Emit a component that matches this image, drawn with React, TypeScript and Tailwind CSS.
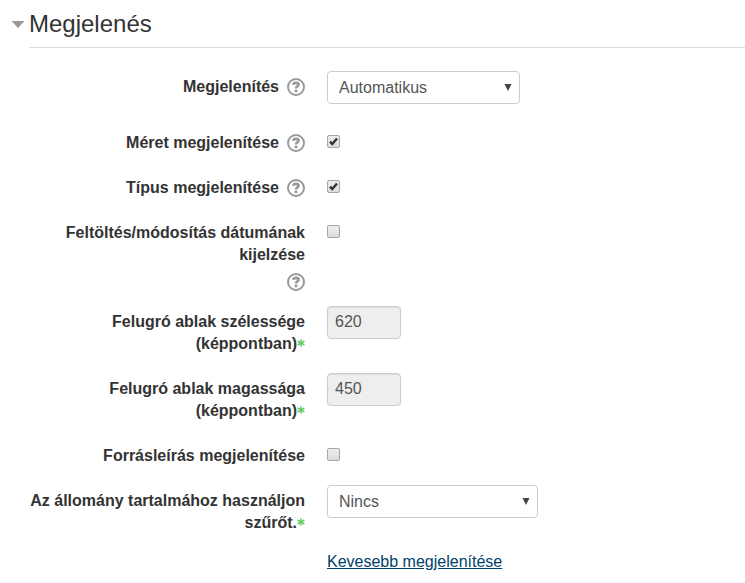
import { useId, type ReactNode } from "react";

function RequiredMark() {
  return (
    <svg
      className="inline-block h-2 w-2 align-[2px]"
      viewBox="0 0 8 8"
      role="img"
      aria-label="Kötelező"
    >
      <path
        d="M4 0.3v7.4M0.6 2l6.8 4M7.4 2l-6.8 4"
        stroke="#6acb6a"
        strokeWidth="1.5"
        fill="none"
      />
    </svg>
  );
}

function HelpButton({ topic }: { topic: string }) {
  return (
    <button
      type="button"
      aria-label={`Súgó: ${topic}`}
      className="flex h-[22px] w-[18px] items-center"
    >
      <svg className="h-[18px] w-[18px]" viewBox="0 0 18 18" fill="none">
        <circle cx="9" cy="9" r="8" stroke="#999" strokeWidth="2" />
        <path
          d="M6.3 6.9C6.5 5.5 7.5 4.9 9 4.9s2.6 0.7 2.6 1.9c0 1.7-2.6 1.6-2.6 3.6"
          stroke="#999"
          strokeWidth="2.6"
        />
        <rect x="7.6" y="11.6" width="2.8" height="2.6" rx="0.8" fill="#999" />
      </svg>
    </button>
  );
}

type RowProps = {
  label: string;
  required?: boolean;
  help?: boolean;
  children: (id: string) => ReactNode;
};

function Row({ label, required, help, children }: RowProps) {
  const id = useId();
  return (
    <div className="flex items-start gap-[22px]">
      <div className="flex w-[276px] shrink-0 flex-wrap items-start justify-end gap-x-2 pt-[5px]">
        <label htmlFor={id} className="pb-[5px] text-right font-bold">
          {label}
          {required && <RequiredMark />}
        </label>
        {help && <HelpButton topic={label} />}
      </div>
      {children(id)}
    </div>
  );
}

function Select({ id, value, width }: { id: string; value: string; width: string }) {
  return (
    <div className={`relative mb-2.5 ${width}`}>
      <select
        id={id}
        className="h-[33px] w-full appearance-none rounded-[4px] border border-[#ccc] bg-white pr-7 pl-[11px] text-[#555]"
      >
        <option>{value}</option>
      </select>
      <svg
        className="pointer-events-none absolute top-[13px] right-2 h-[7px] w-2"
        viewBox="0 0 8 7"
        fill="#444"
      >
        <path d="M0.5 0h7L4 7z" />
      </svg>
    </div>
  );
}

function Checkbox({ id, checked }: { id: string; checked?: boolean }) {
  return (
    <span className="relative mt-2 block h-[13px] w-[13px]">
      <input
        id={id}
        type="checkbox"
        defaultChecked={checked}
        className="peer block h-[13px] w-[13px] appearance-none rounded-[2px] border border-[#a6a6a6] bg-linear-to-b from-[#ededed] to-[#dcdcdc]"
      />
      <svg
        className="pointer-events-none absolute inset-0 hidden h-[13px] w-[13px] peer-checked:block"
        viewBox="0 0 13 13"
        fill="none"
      >
        <path d="M3 6.6l2.3 2.5L10 3.4" stroke="#333" strokeWidth="2.3" />
      </svg>
    </span>
  );
}

function SizeInput({ id, value }: { id: string; value: string }) {
  return (
    <input
      id={id}
      type="text"
      defaultValue={value}
      disabled
      className="h-[33px] w-[74px] rounded-[4px] border border-[#ccc] bg-[#eee] px-[7px] pb-0.5 text-[#555] shadow-[inset_0_1px_1px_rgba(0,0,0,0.075)]"
    />
  );
}

export default function App() {
  return (
    <main className="min-h-screen bg-white pt-2 pl-[11px] font-['Liberation_Sans',Arial,sans-serif] text-base leading-[22px] text-[#333]">
      <h2 className="text-2xl leading-8">
        <button type="button" className="flex w-full items-center gap-1" aria-expanded="true">
          <svg className="h-[7px] w-3.5" viewBox="0 0 14 7" fill="#999">
            <path d="M0.5 0h13L7 7z" />
          </svg>
          Megjelenés
        </button>
      </h2>
      <div className="ml-[18px]">
        <hr className="mt-[7px] border-[#ddd]" />
        <form className="mt-[23px] flex flex-col gap-[13px]">
          <Row label="Megjelenítés" help>
            {(id) => <Select id={id} value="Automatikus" width="w-[193px]" />}
          </Row>
          <Row label="Méret megjelenítése" help>
            {(id) => <Checkbox id={id} checked />}
          </Row>
          <Row label="Típus megjelenítése" help>
            {(id) => <Checkbox id={id} checked />}
          </Row>
          <Row label="Feltöltés/módosítás dátumának kijelzése" help>
            {(id) => <Checkbox id={id} />}
          </Row>
          <Row label="Felugró ablak szélessége (képpontban)" required>
            {(id) => <SizeInput id={id} value="620" />}
          </Row>
          <Row label="Felugró ablak magassága (képpontban)" required>
            {(id) => <SizeInput id={id} value="450" />}
          </Row>
          <Row label="Forrásleírás megjelenítése">
            {(id) => <Checkbox id={id} />}
          </Row>
          <Row label="Az állomány tartalmához használjon szűrőt." required>
            {(id) => <Select id={id} value="Nincs" width="w-[211px]" />}
          </Row>
          <a href="#" className="ml-[298px] self-start leading-5 text-[#00426b] underline">
            Kevesebb megjelenítése
          </a>
        </form>
      </div>
    </main>
  );
}
